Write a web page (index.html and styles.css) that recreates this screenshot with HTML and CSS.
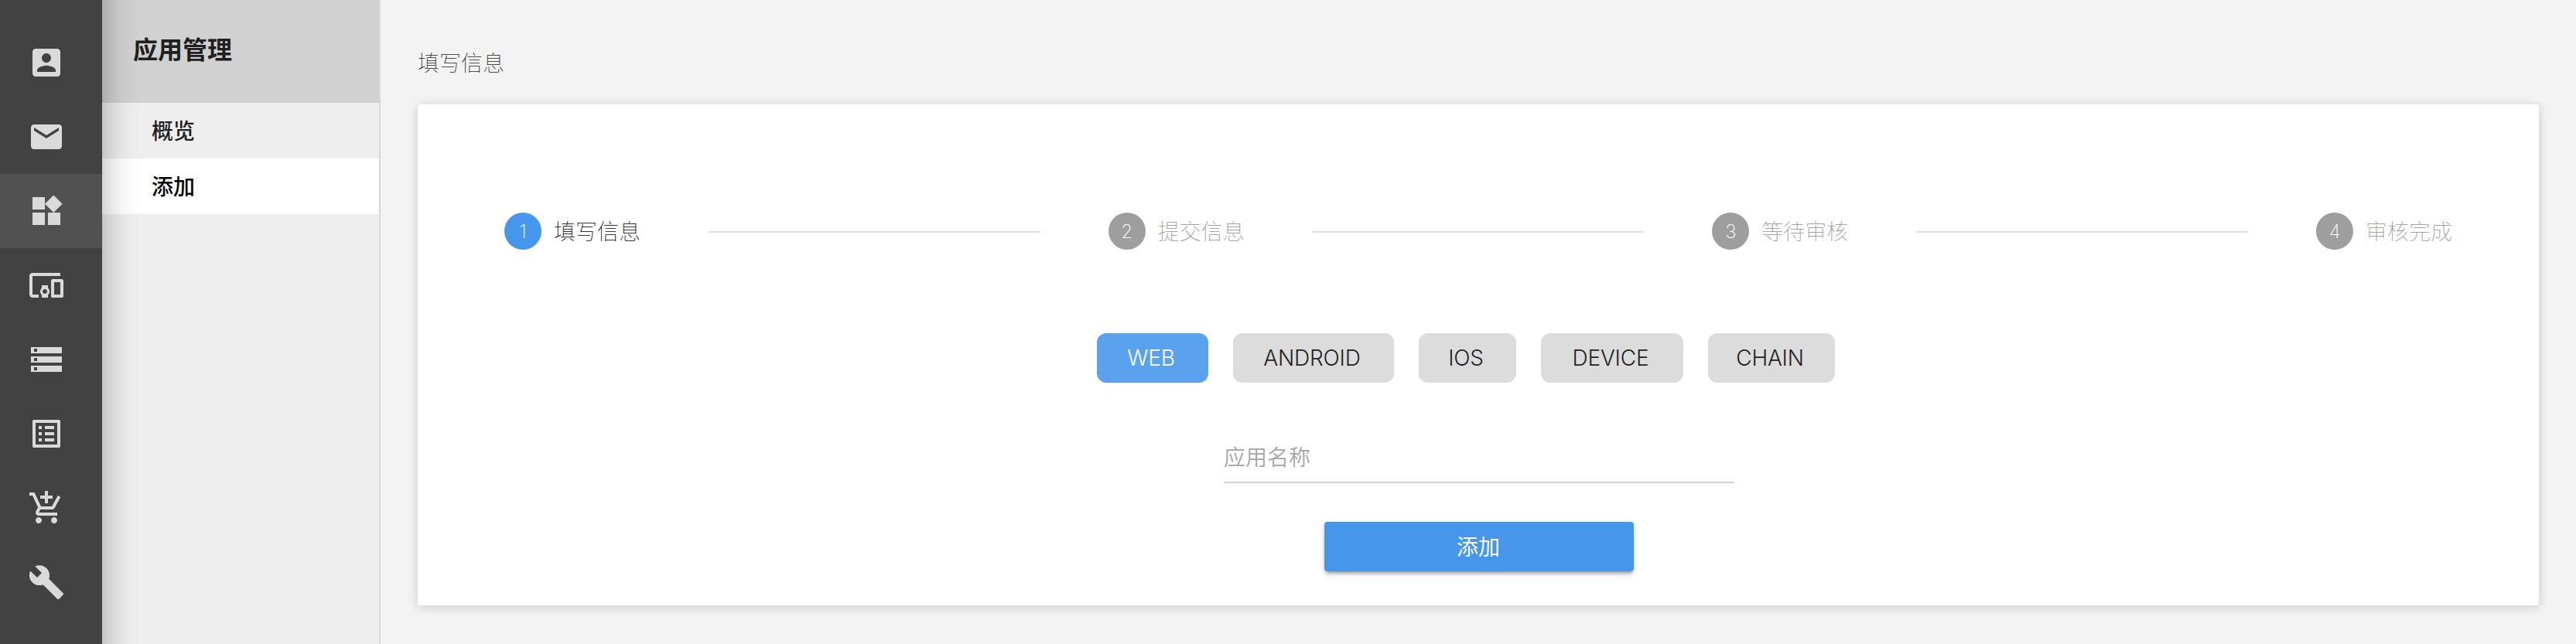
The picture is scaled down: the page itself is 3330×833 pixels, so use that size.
FILE: index.html
```html
<!DOCTYPE html>
<html lang="zh-CN">
<head>
<meta charset="utf-8">
<title>应用管理</title>
<link rel="stylesheet" href="styles.css">
</head>
<body>
<div class="app">
  <nav class="rail">
    <a class="rail-item"><svg class="icon" viewBox="0 0 24 24"><path d="M3 5v14c0 1.1.89 2 2 2h14c1.1 0 2-.9 2-2V5c0-1.1-.9-2-2-2H5c-1.11 0-2 .9-2 2zm12 4c0 1.66-1.34 3-3 3s-3-1.34-3-3 1.34-3 3-3 3 1.34 3 3zm-9 8c0-2 4-3.1 6-3.1s6 1.100 6 3.100v1H6v-1z"/></svg></a>
    <a class="rail-item"><svg class="icon" viewBox="0 0 24 24"><path d="M20 4H4c-1.100 0-1.990.9-1.990 2L2 18c0 1.100.9 2 2 2h16c1.100 0 2-.9 2-2V6c0-1.100-.9-2-2-2zm0 4l-8 5-8-5V6l8 5 8-5v2z"/></svg></a>
    <a class="rail-item active"><svg class="icon" viewBox="0 0 24 24"><path d="M13 13v8h8v-8h-8zM3 21h8v-8H3v8zM3 3v8h8V3H3zm13.660-1.310L11 7.340 16.660 13l5.660-5.660-5.660-5.650z"/></svg></a>
    <a class="rail-item"><svg class="icon" viewBox="0 0 24 24"><path d="M3 6h18V4H3c-1.100 0-2 .9-2 2v12c0 1.100.9 2 2 2h4v-2H3V6zm10 6H9v1.780c-.61.55-1 1.330-1 2.220s.39 1.670 1 2.220V20h4v-1.780c.61-.55 1-1.340 1-2.220s-.39-1.670-1-2.220V12zm-2 5.500c-.83 0-1.500-.67-1.500-1.500s.67-1.500 1.500-1.500 1.500.67 1.500 1.500-.67 1.500-1.500 1.500zM22 8h-6c-.5 0-1 .5-1 1v10c0 .5.5 1 1 1h6c.5 0 1-.5 1-1V9c0-.5-.5-1-1-1zm-1 10h-4v-8h4v8z"/></svg></a>
    <a class="rail-item"><svg class="icon" viewBox="0 0 24 24"><path d="M2 20h20v-4H2v4zm2-3h2v2H4v-2zM2 4v4h20V4H2zm4 3H4V5h2v2zm-4 7h20v-4H2v4zm2-3h2v2H4v-2z"/></svg></a>
    <a class="rail-item"><svg class="icon" viewBox="0 0 24 24"><path d="M19 5v14H5V5h14m1.100-2H3.900c-.5 0-.9.4-.9.9v16.200c0 .4.400.9.900.9h16.200c.4 0 .9-.5.900-.9V3.900c0-.5-.5-.9-.9-.9zM11 7h6v2h-6V7zm0 4h6v2h-6v-2zm0 4h6v2h-6zM7 7h2v2H7zm0 4h2v2H7zm0 4h2v2H7z"/></svg></a>
    <a class="rail-item"><svg class="icon" viewBox="0 0 24 24"><path d="M11 9h2V6h3V4h-3V1h-2v3H8v2h3v3zm-4 9c-1.100 0-1.990.9-1.990 2S5.900 22 7 22s2-.9 2-2-.9-2-2-2zm10 0c-1.100 0-1.990.9-1.990 2s.89 2 1.990 2 2-.9 2-2-.9-2-2-2zm-9.830-3.250l.03-.12.9-1.630h7.450c.75 0 1.410-.41 1.750-1.030l3.860-7.010L19.420 4h-.01l-1.100 2-2.760 5H8.530l-.13-.27L6.160 6l-.95-2-.94-2H1v2h2l3.600 7.590-1.350 2.450c-.16.28-.25.61-.25.960 0 1.100.9 2 2 2h12v-2H7.420c-.13 0-.25-.11-.25-.25z"/></svg></a>
    <a class="rail-item"><svg class="icon" viewBox="0 0 24 24"><path d="M22.700 19l-9.100-9.100c.9-2.300.4-5-1.500-6.900-2-2-5-2.400-7.400-1.300L9 6 6 9 1.600 4.700C.4 7.100.9 10.100 2.900 12.100c1.900 1.900 4.600 2.400 6.900 1.500l9.100 9.100c.4.4 1 .4 1.400 0l2.300-2.300c.5-.4.5-1.100.1-1.400z"/></svg></a>
  </nav>
  <aside class="panel">
    <h1 class="panel-title">应用管理</h1>
    <a class="panel-item">概览</a>
    <a class="panel-item selected">添加</a>
  </aside>
  <main class="content">
    <h2 class="page-title">填写信息</h2>
    <section class="card">
      <div class="stepper">
        <div class="step current"><span class="num">1</span><span class="label">填写信息</span></div>
        <div class="line"></div>
        <div class="step"><span class="num">2</span><span class="label">提交信息</span></div>
        <div class="line"></div>
        <div class="step"><span class="num">3</span><span class="label">等待审核</span></div>
        <div class="line"></div>
        <div class="step"><span class="num">4</span><span class="label">审核完成</span></div>
      </div>
      <div class="tabs">
        <button class="tab web">WEB</button>
        <button class="tab android">ANDROID</button>
        <button class="tab ios">IOS</button>
        <button class="tab device">DEVICE</button>
        <button class="tab chain">CHAIN</button>
      </div>
      <div class="field">应用名称</div>
      <button class="submit">添加</button>
    </section>
  </main>
</div>
</body>
</html>
```
FILE: styles.css
```css
* { box-sizing: border-box; }
body {
  margin: 0;
  font-family: Inter, "Noto Sans CJK SC", sans-serif;
  font-size: 28px;
  color: #1f1f1f;
}
.app {
  display: flex;
  height: 833px;
  overflow: hidden;
  background: #f3f3f3;
}
/* Runs past both window edges so its shadow stays even over the full height */
.rail {
  position: relative;
  z-index: 1;
  flex: 0 0 132px;
  margin: -60px 0;
  padding-top: 93px;
  background: #424242;
  box-shadow: 0 0 46px rgba(0, 0, 0, .34);
}
.rail-item {
  display: flex;
  align-items: center;
  height: 96px;
  padding-left: 36px;
}
.rail-item.active { background: #515151; }
.icon { width: 48px; height: 48px; fill: #dadada; }

.panel {
  flex: 0 0 360px;
  background: #eee;
  border-right: 2px solid #d8d8d8;
}
.panel-title {
  display: flex;
  align-items: center;
  height: 133px;
  margin: 0;
  padding: 0 0 9px 40px;
  background: #d1d1d1;
  font-size: 32px;
  font-weight: 700;
}
.panel-item {
  display: flex;
  align-items: center;
  height: 72px;
  padding: 0 0 2px 64px;
  font-weight: 500;
}
.panel-item.selected { background: #fff; color: #000; }

.content {
  flex: 1;
  padding: 62px 48px 0;
}
.page-title {
  margin: 0 0 33px;
  font-size: 28px;
  line-height: 40px;
  font-weight: 100;
}
.card {
  display: flex;
  flex-direction: column;
  align-items: center;
  height: 648px;
  padding: 140px 112px 0;
  background: #fff;
  border-radius: 4px;
  box-shadow: 0 2px 14px rgba(0, 0, 0, .18);
}
.stepper {
  display: flex;
  align-items: center;
  gap: 88px;
  width: 100%;
  height: 48px;
}
.step {
  display: flex;
  align-items: center;
  gap: 16px;
  color: #949494;
  font-weight: 100;
  white-space: nowrap;
}
.step.current { color: #000; }
.label { padding-bottom: 2px; }
.num {
  display: flex;
  align-items: center;
  justify-content: center;
  width: 48px;
  height: 48px;
  border-radius: 50%;
  background: #9e9e9e;
  color: #fff;
  font-size: 24px;
  font-weight: 200;
}
.current .num { background: #4696ec; }
.line { flex: 1; height: 2px; margin-top: 2px; background: #e0e0e0; }

.tabs {
  display: flex;
  gap: 32px;
  margin: 108px 32px 0 0;
}
.tab {
  height: 64px;
  padding: 0 4px 0 0;
  border: 0;
  border-radius: 12px;
  background: #dcdcdc;
  color: #1f1f1f;
  font: 300 28px Inter, "Liberation Sans", sans-serif;
  letter-spacing: -.2px;
}
.web { width: 144px; background: #5aa1ee; color: #fff; }
.android { width: 208px; }
.ios { width: 126px; }
.device { width: 184px; }
.chain { width: 164px; }

.field {
  width: 660px;
  height: 66px;
  margin: 64px 0 50px 2px;
  padding-top: 13px;
  border-bottom: 2px solid #d3d3d3;
  color: #a6a6a6;
  font-weight: 350;
  line-height: 40px;
}
.submit {
  width: 400px;
  height: 64px;
  margin-left: 2px;
  padding: 0 2px 2px 0;
  border: 0;
  border-radius: 4px;
  background: #4696ec;
  color: #fff;
  font: 400 28px "Noto Sans CJK SC", sans-serif;
  box-shadow: 0 6px 2px -4px rgba(0, 0, 0, .2), 0 4px 4px rgba(0, 0, 0, .14), 0 2px 10px rgba(0, 0, 0, .12);
}
```
